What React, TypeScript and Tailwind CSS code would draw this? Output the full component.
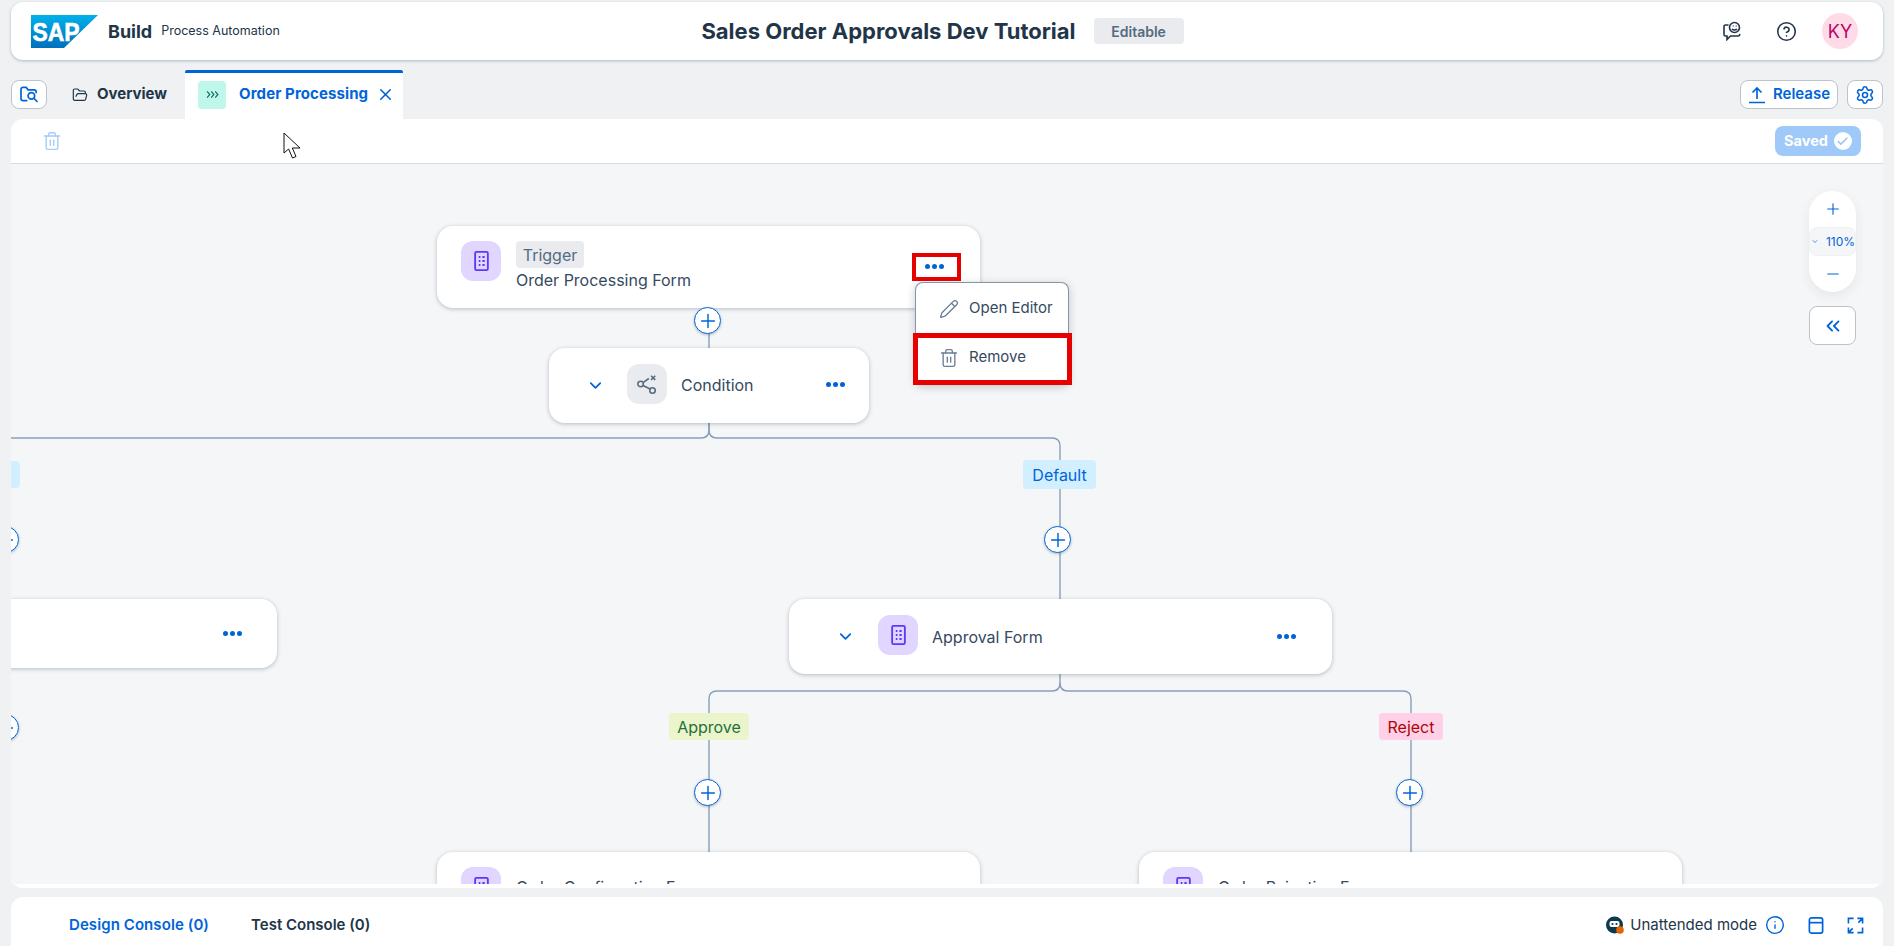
import React from "react";
import { FolderOpen, Trash2, Pencil, X, ChevronDown, ChevronsLeft, Plus, Minus, Settings, CircleHelp, Info, Check } from "lucide-react";

const FormIcon = ({ className = "" }: { className?: string }) => (
  <svg viewBox="0 0 16 22" className={className} fill="none" stroke="#5d36ff">
    <rect x="1" y="1" width="14" height="20" rx="1.5" strokeWidth="2" />
    <path d="M5 6.5h1.8M9 6.5h2.5M5 11h1.8M9 11h2.5M5 15.5h1.8M9 15.5h2.5" strokeWidth="2.2" />
  </svg>
);

const Dots = ({ className = "" }: { className?: string }) => (
  <span className={`flex gap-[2px] ${className}`}>
    <span className="w-[5px] h-[5px] rounded-full bg-[#0064d9]" />
    <span className="w-[5px] h-[5px] rounded-full bg-[#0064d9]" />
    <span className="w-[5px] h-[5px] rounded-full bg-[#0064d9]" />
  </span>
);

const AddButton = ({ className }: { className: string }) => (
  <button className={`absolute w-[27px] h-[27px] rounded-full bg-white border-[1.5px] border-[#0064d9] shadow-[0_1px_3px_rgba(34,53,72,0.3)] flex items-center justify-center ${className}`}>
    <Plus size={22} strokeWidth={1.6} color="#0064d9" />
  </button>
);

const IconTile = ({ children, className = "bg-[#e0d6ff]" }: { children: React.ReactNode; className?: string }) => (
  <div className={`w-[40px] h-[40px] rounded-[12px] flex items-center justify-center shrink-0 ${className}`}>{children}</div>
);

const nodeClass =
  "absolute bg-white rounded-[16px] shadow-[0_1px_4px_rgba(34,53,72,0.3)] flex items-center";

const Badge = ({ children, className }: { children: React.ReactNode; className: string }) => (
  <div className={`absolute rounded-[4px] text-[16px] flex items-center justify-center ${className}`}>{children}</div>
);

export default function App() {
  return (
    <div className="h-[946px] w-[1894px] overflow-hidden bg-[#eff1f3] px-[11px] pt-[2px] flex flex-col font-['Inter','Noto_Sans',sans-serif] text-[#223548] relative">
      {/* Shell bar */}
      <header className="h-[58px] shrink-0 bg-white rounded-[12px] shadow-[0_1px_3px_rgba(34,53,72,0.3)] grid grid-cols-[1fr_auto_1fr] items-center pl-[20px] pr-[25px]">
        <div className="flex items-center">
          <svg viewBox="0 0 67 33" className="w-[67px] h-[33px]">
            <defs>
              <linearGradient id="sapg" x1="0" y1="0" x2="0" y2="1">
                <stop offset="0" stopColor="#00b1eb" />
                <stop offset="1" stopColor="#0070bb" />
              </linearGradient>
            </defs>
            <path d="M0 0H67L33 33H0Z" fill="url(#sapg)" />
            <text x="1.5" y="26" fill="#fff" stroke="#fff" strokeWidth="0.6" fontFamily="Liberation Sans" fontWeight="700" fontSize="25" textLength="47" lengthAdjust="spacingAndGlyphs">SAP</text>
          </svg>
          <span className="ml-[10px] text-[18px] font-bold">Build</span>
          <span className="ml-[9px] text-[12.5px]">Process Automation</span>
        </div>
        <div className="flex items-center mr-[4px]">
          <span className="text-[22px] font-bold">Sales Order Approvals Dev Tutorial</span>
          <span className="ml-[18px] w-[90px] h-[26px] rounded-[4px] bg-[#e9ebee] text-[#556b82] text-[14px] font-semibold flex items-center justify-center">Editable</span>
        </div>
        <div className="flex items-center justify-end">
          <svg viewBox="0 0 20 20" className="w-[20px] h-[20px]" fill="none" stroke="#223548" strokeWidth="1.6">
            <path d="M6 4H3.5A1.5 1.5 0 0 0 2 5.5v8A1.5 1.5 0 0 0 3.5 15H5v3.5L8.5 15H16a1.8 1.8 0 0 0 1.8-1.5" strokeLinecap="round" />
            <circle cx="12.5" cy="6.5" r="5" />
            <path d="M10 8c1.2 1.4 3.8 1.4 5 0" />
            <path d="M10.8 5h.6M13.8 5h.6" strokeWidth="1.8" />
          </svg>
          <CircleHelp size={21} strokeWidth={1.8} className="ml-[34px]" color="#223548" />
          <div className="ml-[25px] w-[36px] h-[36px] rounded-full bg-[#ffdbe7] text-[#ba066c] text-[18px] flex items-center justify-center">KY</div>
        </div>
      </header>

      {/* Tabs */}
      <div className="h-[59px] shrink-0 pt-[10px] flex items-center">
        <button className="w-[36px] h-[29px] rounded-[8px] bg-white border border-[#bcc3ca] flex items-center justify-center">
          <svg viewBox="0 0 20 18" className="w-[19px] h-[17px]" fill="none" stroke="#0064d9" strokeWidth="1.8">
            <path d="M7 15.5H3a2 2 0 0 1-2-2v-10a2 2 0 0 1 2-2h3.5l2 2.5H15a2 2 0 0 1 2 2v1" strokeLinecap="round" />
            <circle cx="12" cy="10.5" r="3.5" />
            <path d="M14.8 13.2l3.2 3.2" strokeLinecap="round" />
          </svg>
        </button>
        <FolderOpen size={16} strokeWidth={1.8} className="ml-[25px]" color="#223548" />
        <span className="ml-[9px] text-[15px] font-bold mr-[18px]">Overview</span>
        <div className="self-stretch w-[218px] bg-white border-t-[3px] border-[#0064d9] flex items-center pl-[13px] pb-[3px] rounded-t-[2px]">
          <div className="w-[28px] h-[28px] rounded-[4px] bg-[#bff8ea] flex items-center justify-center">
            <svg viewBox="0 0 14 10" className="w-[13px] h-[9px]" fill="none" stroke="#0b6e66" strokeWidth="1.3">
              <path d="M1 1.5 4 5 1 8.5M5.5 1.5 8.5 5 5.5 8.5M10 1.5 13 5 10 8.5" />
            </svg>
          </div>
          <span className="ml-[13px] text-[15px] font-bold text-[#0064d9] whitespace-nowrap tracking-[0.1px]">Order Processing</span>
          <X size={19} strokeWidth={2} color="#0064d9" className="ml-[8px] shrink-0" />
        </div>
        <button className="ml-auto w-[98px] h-[29px] rounded-[8px] bg-white border border-[#bcc3ca] flex items-center justify-center gap-[7px] text-[#0064d9] text-[15px] font-semibold">
          <svg viewBox="0 0 18 18" className="w-[18px] h-[18px]" fill="none" stroke="#0064d9" strokeWidth="1.7">
            <path d="M9 13V2M4.5 6.5 9 2l4.5 4.5M1 16.5h16" />
          </svg>
          Release
        </button>
        <button className="ml-[9px] w-[36px] h-[29px] rounded-[8px] bg-white border border-[#bcc3ca] flex items-center justify-center">
          <Settings size={20} strokeWidth={1.9} color="#0064d9" />
        </button>
      </div>

      {/* Editor panel */}
      <section className="shrink-0 bg-white rounded-[12px] pb-[4px]">
        <div className="h-[45px] border-b border-[#d9dcdf] flex items-center pl-[31px] pr-[22px]">
          <Trash2 size={20} strokeWidth={1.7} color="#a6cdf5" />
          <div className="ml-auto w-[86px] h-[30px] rounded-[8px] bg-[#9fc9f8] text-white text-[14.5px] font-bold flex items-center justify-center gap-[6px]">
            Saved
            <span className="w-[18px] h-[18px] rounded-full bg-white flex items-center justify-center">
              <Check size={13} strokeWidth={3.2} color="#9fc9f8" />
            </span>
          </div>
        </div>

        <div className="relative h-[720px] bg-[#f5f6f7] overflow-hidden text-[#354a5f]">
          {/* connectors */}
          <svg className="absolute left-0 top-0 w-[1872px] h-[720px]" fill="none" stroke="#86a0ba" strokeWidth="1.4">
            <path d="M698 144V184" />
            <path d="M698 259V266Q698 274 690 274H-10" />
            <path d="M698 259V266Q698 274 706 274H1041Q1049 274 1049 282V435" />
            <path d="M1049 510V519Q1049 527 1041 527H706Q698 527 698 535V688" />
            <path d="M1049 519Q1049 527 1057 527H1392Q1400 527 1400 535V688" />
          </svg>

          {/* Trigger */}
          <div className={`${nodeClass} !items-start left-[426px] top-[62px] w-[543px] h-[82px] pl-[24px] pt-[15px]`}>
            <IconTile><FormIcon className="w-[15px] h-[20px]" /></IconTile>
            <div className="ml-[15px]">
              <div className="w-[68px] h-[27px] rounded-[4px] bg-[#e9ebee] text-[#556b82] text-[16px] flex items-center justify-center">Trigger</div>
              <div className="text-[16px]">Order Processing Form</div>
            </div>
            <Dots className="absolute left-[488px] top-[38px]" />
          </div>

          {/* Condition */}
          <div className={`${nodeClass} left-[538px] top-[184px] w-[320px] h-[75px] pl-[37px]`}>
            <ChevronDown size={19} strokeWidth={2.2} color="#0064d9" />
            <IconTile className="bg-[#e9ebee] ml-[22px] mb-[4px]">
              <svg viewBox="0 0 24 24" className="w-[22px] h-[22px]" fill="none" stroke="#556b82" strokeWidth="1.7">
                <circle cx="5" cy="12" r="3" />
                <circle cx="18" cy="19" r="3" />
                <path d="M7.7 10.4 14 6M7.7 13.6 15.4 17.5M16.5 3l4.5 4.5M21 3l-4.5 4.5" />
              </svg>
            </IconTile>
            <span className="ml-[14px] mb-[2px] text-[16px]">Condition</span>
            <Dots className="absolute right-[24px] top-[34px]" />
          </div>

          {/* Left branch node */}
          <div className={`${nodeClass} left-[-277px] top-[435px] w-[543px] h-[69px]`}>
            <Dots className="absolute right-[35px] top-[32px]" />
          </div>

          {/* Approval */}
          <div className={`${nodeClass} left-[778px] top-[435px] w-[543px] h-[75px] pl-[47px]`}>
            <ChevronDown size={19} strokeWidth={2.2} color="#0064d9" />
            <IconTile className="bg-[#e0d6ff] ml-[23px] mb-[3px]"><FormIcon className="w-[15px] h-[20px]" /></IconTile>
            <span className="ml-[14px] text-[16px]">Approval Form</span>
            <Dots className="absolute left-[488px] top-[35px]" />
          </div>

          {/* Bottom nodes */}
          <div className={`${nodeClass} !items-start left-[426px] top-[688px] w-[543px] h-[82px] pl-[24px] pt-[15px]`}>
            <IconTile><FormIcon className="w-[15px] h-[20px]" /></IconTile>
            <span className="ml-[15px] mt-[8px] text-[16px]">Order Confirmation Form</span>
          </div>
          <div className={`${nodeClass} !items-start left-[1128px] top-[688px] w-[543px] h-[82px] pl-[24px] pt-[15px]`}>
            <IconTile><FormIcon className="w-[15px] h-[20px]" /></IconTile>
            <span className="ml-[15px] mt-[8px] text-[16px]">Order Rejection Form</span>
          </div>

          {/* Badges */}
          <Badge className="left-[-60px] top-[297px] w-[69px] h-[27px] bg-[#d1efff] text-[#0064d9]">{""}</Badge>
          <Badge className="left-[1012px] top-[296px] w-[73px] h-[29px] bg-[#d1efff] text-[#0064d9]">Default</Badge>
          <Badge className="left-[658px] top-[549px] w-[80px] h-[27px] bg-[#ebf5cb] text-[#256f3a]">Approve</Badge>
          <Badge className="left-[1368px] top-[549px] w-[64px] h-[27px] bg-[#ffd0e7] text-[#aa0808]">Reject</Badge>

          {/* Add buttons */}
          <AddButton className="left-[683px] top-[143px]" />
          <AddButton className="left-[-19px] top-[362px]" />
          <AddButton className="left-[1033px] top-[362px]" />
          <AddButton className="left-[-19px] top-[550px]" />
          <AddButton className="left-[683px] top-[615px]" />
          <AddButton className="left-[1385px] top-[615px]" />

          {/* Zoom control */}
          <div className="absolute left-[1798px] top-[27px] w-[47px] h-[101px] rounded-full bg-white shadow-[0_4px_12px_rgba(34,53,72,0.08)] flex flex-col">
            <div className="h-[36px] flex items-center justify-center">
              <Plus size={18} strokeWidth={1.5} color="#0064d9" />
            </div>
            <div className="h-[29px] bg-[#f5f6f7] rounded-[8px] border border-[#eff1f3] flex items-center pl-[1px] text-[12px] text-[#0064d9]">
              <ChevronDown size={9} strokeWidth={2} color="#0064d9" />
              <span className="ml-[7px]">110%</span>
            </div>
            <div className="flex-1 flex items-center justify-center">
              <Minus size={18} strokeWidth={1.5} color="#0064d9" />
            </div>
          </div>
          <button className="absolute left-[1798px] top-[142px] w-[47px] h-[39px] rounded-[8px] bg-white border border-[#bcc3ca] flex items-center justify-center">
            <ChevronsLeft size={22} strokeWidth={2} color="#0064d9" />
          </button>

          {/* Context menu */}
          <div className="absolute left-[904px] top-[118px] w-[154px] h-[103px] bg-white rounded-[8px] border border-[#8396a8] border-b-0 shadow-[0_2px_8px_rgba(34,53,72,0.25)] text-[15px] flex flex-col">
            <div className="h-[51px] flex items-center pl-[23px] gap-[10px]">
              <Pencil size={20} strokeWidth={1.6} color="#6a7f95" />
              Open Editor
            </div>
            <div className="h-[47px] flex items-center pl-[23px] gap-[10px]">
              <Trash2 size={20} strokeWidth={1.6} color="#6a7f95" />
              Remove
            </div>
          </div>

          {/* Annotation boxes */}
          <div className="absolute left-[901px] top-[89px] w-[49px] h-[28px] border-[4px] border-[#e60000]" />
          <div className="absolute left-[902px] top-[169px] w-[159px] h-[52px] border-[5px] border-[#e60000]" />
        </div>
      </section>

      {/* Footer */}
      <footer className="mt-[9px] h-[60px] shrink-0 bg-white rounded-[12px] flex items-start pt-[17px] pl-[58px] pr-[19px] text-[15px]">
        <span className="font-semibold text-[#0064d9] tracking-[0.08px]">Design Console (0)</span>
        <span className="ml-[42px] font-semibold">Test Console (0)</span>
        <div className="ml-auto flex items-center">
          <svg viewBox="0 0 18 18" className="w-[18px] h-[18px]">
            <circle cx="8.5" cy="9" r="8.5" fill="#0b3a4f" />
            <rect x="3.5" y="5" width="10" height="6" rx="2" fill="#fff" />
            <circle cx="6.5" cy="8" r="1.1" fill="#0b3a4f" />
            <circle cx="10.5" cy="8" r="1.1" fill="#0b3a4f" />
            <circle cx="14" cy="14" r="3.8" fill="#e76500" />
          </svg>
          <span className="ml-[6px] text-[15px]">Unattended mode</span>
          <Info size={20} strokeWidth={1.7} color="#0064d9" className="ml-[8px]" />
          <svg viewBox="0 0 16 18" className="ml-[23px] w-[16px] h-[17px]" fill="none" stroke="#0064d9" strokeWidth="1.8">
            <rect x="1" y="1" width="14" height="16" rx="2" />
            <path d="M1 6h14" />
          </svg>
          <svg viewBox="0 0 18 18" className="ml-[23px] w-[17px] h-[17px]" fill="none" stroke="#0064d9" strokeWidth="1.7">
            <path d="M7 1.5H1.5V7M11 16.5h5.5V11M11 1.5h5.5V7M16.5 1.5 12 6M7 16.5H1.5V11M1.5 16.5 6 12" />
          </svg>
        </div>
      </footer>

      {/* Captured mouse pointer */}
      <svg viewBox="0 0 19 28" className="absolute left-[283px] top-[132px] w-[19px] h-[28px]" fill="#fff" stroke="#111" strokeWidth="1">
        <path d="M1 1V21L5.6 17L9.5 26L13 24.5L9.3 16H17Z" />
      </svg>
    </div>
  );
}
